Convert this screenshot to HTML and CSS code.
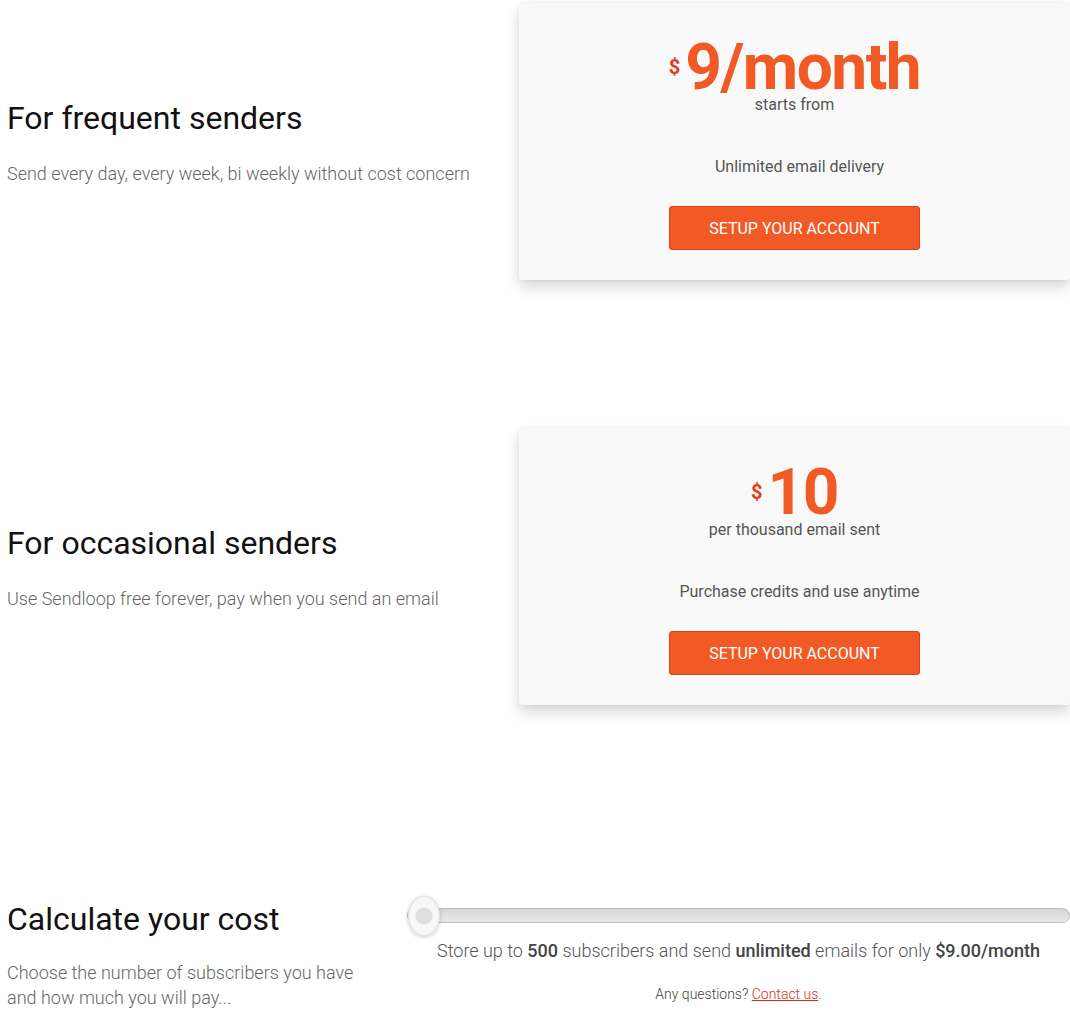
FILE: index.html
```html
<!DOCTYPE html>
<html lang="en">
<head>
    <meta charset="UTF-8">
    <meta name="viewport" content="width=device-width, initial-scale=1.0">
    <title>Pricing</title>
    <link rel="stylesheet" href="styles.css">
</head>
<body>

    <div class="page">

        <div class="plan">
            <div class="plan-info">
                <h2>For frequent senders</h2>
                <p>Send every day, every week, bi weekly without cost concern</p>
            </div>
            <div class="card">
                <div class="price"><span class="currency">$</span>9/month</div>
                <div class="price-note">starts from</div>
                <div class="feature">Unlimited email delivery</div>
                <button class="setup-btn">SETUP YOUR ACCOUNT</button>
            </div>
        </div>

        <div class="plan plan-second">
            <div class="plan-info">
                <h2>For occasional senders</h2>
                <p>Use Sendloop free forever, pay when you send an email</p>
            </div>
            <div class="card">
                <div class="price"><span class="currency">$</span>10</div>
                <div class="price-note">per thousand email sent</div>
                <div class="feature">Purchase credits and use anytime</div>
                <button class="setup-btn">SETUP YOUR ACCOUNT</button>
            </div>
        </div>

        <div class="calculator">
            <div class="calc-info">
                <h2>Calculate your cost</h2>
                <p>Choose the number of subscribers you have and how much you will pay...</p>
            </div>
            <div class="calc-control">
                <input type="range" class="range" min="0" max="100" value="0">
                <div class="calc-result">
                    Store up to <b>500</b> subscribers and send <b>unlimited</b> emails for only <b>$9.00/month</b>
                </div>
                <div class="calc-contact">Any questions? <a href="#">Contact us</a>.</div>
            </div>
        </div>

    </div>

</body>
</html>
```

FILE: styles.css
```css
body {
    margin: 0;
    font-family: Roboto, "Liberation Sans", sans-serif;
    background-color: #fff;
    color: #333;
}
.page {
    padding: 3px 0 0 7px;
}
.plan {
    display: flex;
    align-items: center;
}
.plan-second {
    margin-top: 148px;
}
.plan-info {
    width: 512px;
}
h2 {
    margin: 0;
    font-size: 32px;
    font-weight: 400;
    line-height: 40px;
    color: #111;
}
.plan-info p,
.calc-info p {
    margin: 23px 0 0;
    font-size: 18px;
    font-weight: 300;
    line-height: 25px;
    color: #666;
}
.card {
    width: 551px;
    height: 277px;
    box-sizing: border-box;
    padding-top: 35px;
    background-color: #f9f9f9;
    border-radius: 3px;
    box-shadow: 0 7px 14px rgba(0, 0, 0, 0.16), 0 0 4px rgba(0, 0, 0, 0.05);
    text-align: center;
}
.price {
    font-size: 64px;
    font-weight: 700;
    line-height: 60px;
    color: #f15a24;
    letter-spacing: -1.5px;
}
.currency {
    font-size: 20px;
    font-weight: 700;
    line-height: 20px;
    color: #e0401c;
    vertical-align: 15px;
    margin-right: 5px;
    letter-spacing: 0;
}
.price-note {
    margin-top: -2px;
    font-size: 16px;
    line-height: 18px;
    color: #555;
}
.feature {
    margin-top: 43px;
    margin-left: 10px;
    font-size: 16px;
    line-height: 20px;
    color: #555;
}
.setup-btn {
    margin-top: 29px;
    width: 251px;
    height: 44px;
    background-color: #f15a24;
    border: 1px solid #d6401c;
    border-radius: 3px;
    color: #fff;
    font-family: Roboto, "Liberation Sans", sans-serif;
    font-size: 16px;
    font-weight: 400;
    cursor: pointer;
}
.calculator {
    display: flex;
    align-items: flex-start;
    margin-top: 190px;
}
.calc-info {
    width: 400px;
    padding-top: 4px;
}
.calc-info p {
    width: 360px;
    margin-top: 21px;
}
.calc-control {
    flex: 1;
    text-align: center;
}
.range {
    -webkit-appearance: none;
    appearance: none;
    display: block;
    width: 100%;
    height: 40px;
    margin: 0;
    background: transparent;
}
.range::-webkit-slider-runnable-track {
    height: 15px;
    border: 1px solid #bdbdbd;
    border-radius: 8px;
    background: linear-gradient(#d6d6d6, #eaeaea);
    box-sizing: border-box;
}
.range::-webkit-slider-thumb {
    -webkit-appearance: none;
    width: 32px;
    height: 40px;
    margin-top: -13px;
    border-radius: 50%;
    border: 1px solid #ddd;
    background: radial-gradient(circle, #dedede 0, #dedede 8px, #f7f7f7 9px);
    box-shadow: 0 1px 4px rgba(0, 0, 0, 0.2);
}
.calc-result {
    margin-top: 3px;
    font-size: 18px;
    font-weight: 300;
    line-height: 26px;
    color: #555;
}
.calc-result b {
    font-weight: 500;
    color: #444;
}
.calc-contact {
    margin-top: 20px;
    font-size: 14px;
    font-weight: 300;
    line-height: 20px;
    color: #444;
}
.calc-contact a {
    color: #d8310f;
}
```
